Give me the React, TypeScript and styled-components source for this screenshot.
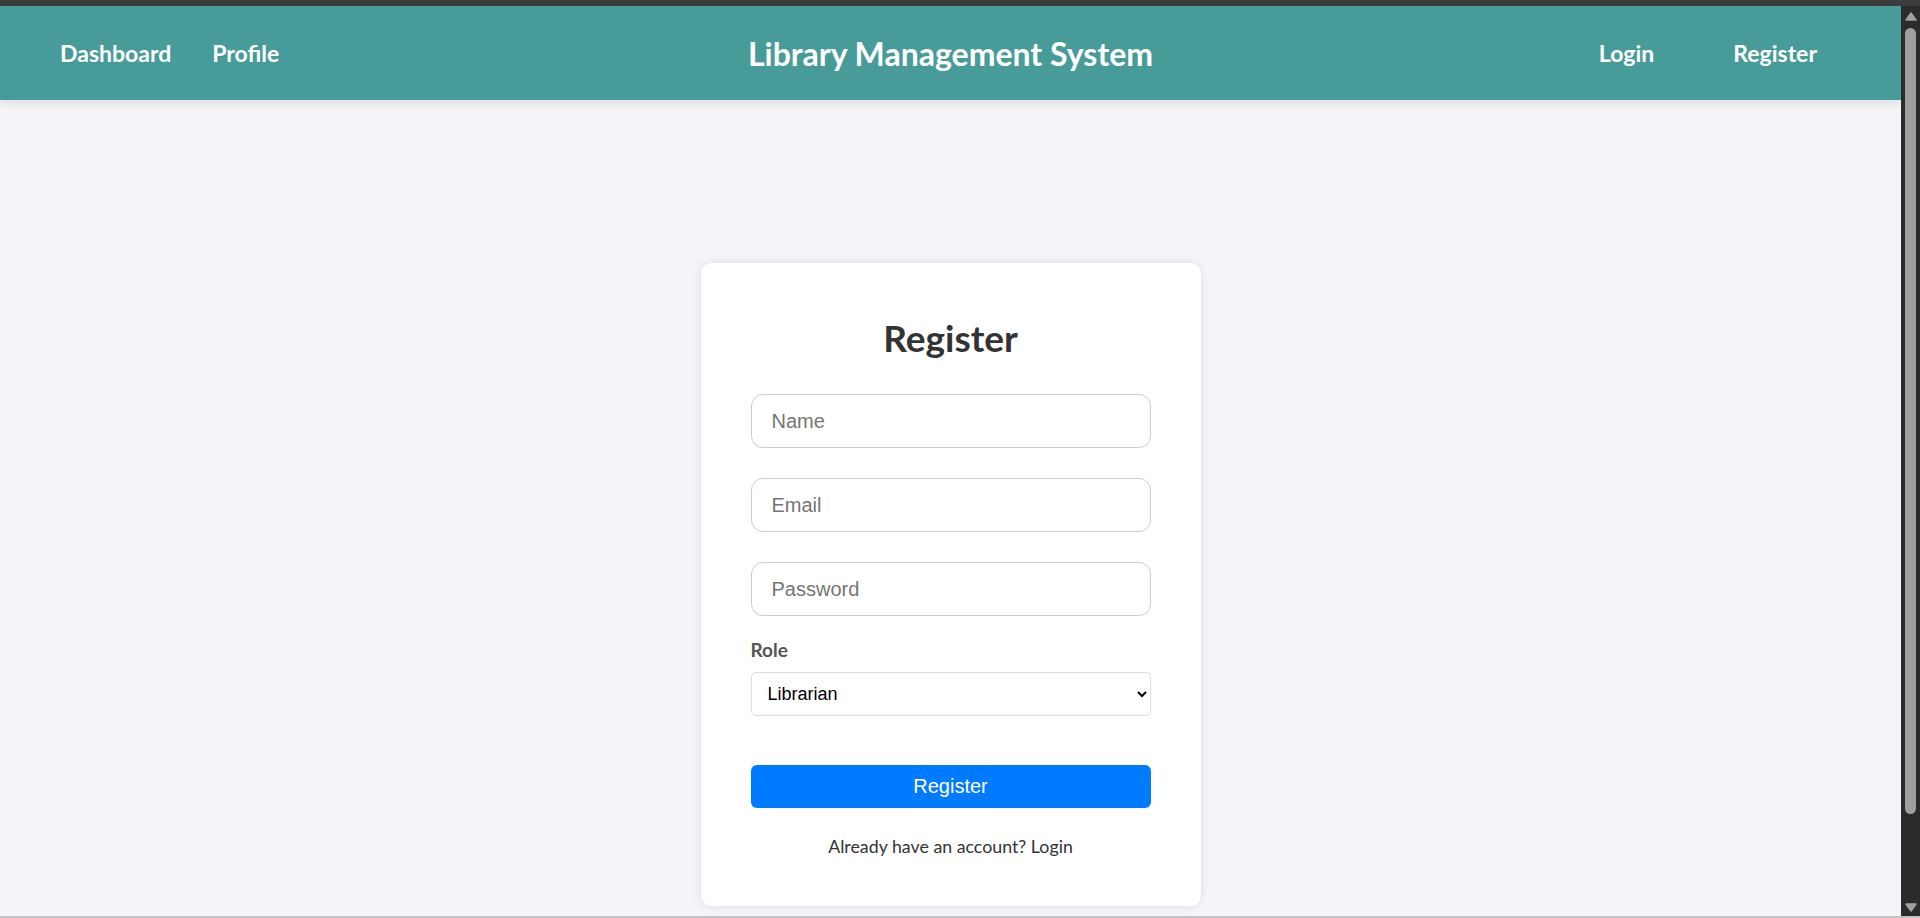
import React from "react";
import styled, { createGlobalStyle } from "styled-components";

const GlobalStyle = createGlobalStyle`
  html, body {
    margin: 0;
    padding: 0;
    height: 100%;
    overflow: hidden;
  }
  #root {
    height: 100%;
  }
  * {
    box-sizing: border-box;
  }
`;

const Frame = styled.div`
  display: flex;
  flex-direction: column;
  height: 100vh;
  background: #3c3c3c;
`;

const TopStrip = styled.div`
  height: 6px;
  flex: none;
  background: #3c3c3c;
`;

const BottomStrip = styled.div`
  height: 2px;
  flex: none;
  background: #c4c4c4;
`;

const Body = styled.div`
  flex: 1;
  min-height: 0;
  display: flex;
`;

const Viewport = styled.div`
  flex: 1;
  min-width: 0;
  overflow: hidden;
  background: #f4f4f9;
  font-family: Lato, "Open Sans", sans-serif;
`;

/* browser scrollbar drawn beside the page */
const Rail = styled.div`
  width: 19px;
  flex: none;
  display: flex;
  flex-direction: column;
  background: #2b2b2b;
`;

const RailButton = styled.div<{ $down?: boolean }>`
  height: 22px;
  flex: none;
  display: flex;
  justify-content: center;
  align-items: ${(p) => (p.$down ? "flex-end" : "flex-start")};
  padding: ${(p) => (p.$down ? "0 0 4px" : "6px 0 0")};
`;

const RailTrack = styled.div`
  flex: 1;
  padding: 0 4px;
`;

const Thumb = styled.div`
  height: 786px;
  background: #9f9f9f;
  border-radius: 6px;
`;

const Arrow = ({ down }: { down?: boolean }) => (
  <svg width="12" height="9" viewBox="0 0 12 9">
    <polygon
      points={down ? "1,1 11,1 6,8" : "6,1 11,8 1,8"}
      fill="#a0a0a0"
      stroke="#a0a0a0"
      strokeWidth="1.5"
      strokeLinejoin="round"
    />
  </svg>
);

const Header = styled.header`
  position: relative;
  z-index: 1;
  height: 94px;
  display: grid;
  grid-template-columns: 1fr auto 1fr;
  align-items: center;
  background: #479b98;
  box-shadow: 0 3px 10px rgba(0, 0, 0, 0.1);
`;

const NavGroup = styled.nav<{ $align: "start" | "end"; $gap: number }>`
  display: flex;
  align-items: center;
  justify-content: ${(p) => (p.$align === "start" ? "flex-start" : "flex-end")};
  gap: ${(p) => p.$gap}px;
  padding: ${(p) => (p.$align === "start" ? "0 0 0 60px" : "0 84px 0 0")};
`;

const NavLink = styled.a`
  color: #ffffff;
  font-size: 23px;
  font-weight: 700;
  text-decoration: none;
  cursor: pointer;
`;

const Title = styled.h1`
  margin: 0;
  color: #ffffff;
  font-size: 32px;
  font-weight: 700;
`;

const Main = styled.main`
  display: flex;
  justify-content: center;
  padding: 163px 0 102px;
`;

const Card = styled.div`
  width: 500px;
  padding: 53px 50px 49px;
  background: #ffffff;
  border-radius: 10px;
  box-shadow: 0 0 10px rgba(0, 0, 0, 0.1);
  display: flex;
  flex-direction: column;
`;

const Heading = styled.h2`
  margin: 0 0 35px;
  text-align: center;
  color: #333333;
  font-size: 37px;
  font-weight: 700;
  line-height: 43px;
`;

const TextInput = styled.input`
  width: 100%;
  height: 54px;
  margin-bottom: 30px;
  padding: 0 20px;
  border: 1px solid #cccccc;
  border-radius: 12px;
  font-family: "Liberation Sans", Arial, sans-serif;
  font-size: 20px;
  color: #333;
  background: #fff;
  outline: none;
  &::placeholder {
    color: #757575;
  }
  &:last-of-type {
    margin-bottom: 22px;
  }
`;

const Label = styled.label`
  display: block;
  margin-bottom: 11px;
  color: #555555;
  font-size: 19px;
  font-weight: 700;
  line-height: 23px;
`;

const Select = styled.select`
  width: 100%;
  height: 44px;
  padding: 0 12px;
  border: 1px solid #dddddd;
  border-radius: 5px;
  background: #ffffff;
  color: #000000;
  font-family: "Liberation Sans", Arial, sans-serif;
  font-size: 18px;
  outline: none;
`;

const SubmitButton = styled.button`
  width: 100%;
  height: 43px;
  margin-top: 49px;
  border: none;
  border-radius: 6px;
  background: #007bff;
  color: #ffffff;
  font-family: "Liberation Sans", Arial, sans-serif;
  font-size: 20px;
  cursor: pointer;
`;

const Footnote = styled.p`
  margin: 27px 0 0;
  text-align: center;
  color: #333333;
  font-size: 17.8px;
  line-height: 22px;
`;

export default function App() {
  return (
    <>
      <GlobalStyle />
      <Frame>
        <TopStrip />
        <Body>
          <Viewport>
            <Header>
              <NavGroup $align="start" $gap={41}>
                <NavLink>Dashboard</NavLink>
                <NavLink>Profile</NavLink>
              </NavGroup>
              <Title>Library Management System</Title>
              <NavGroup $align="end" $gap={79}>
                <NavLink>Login</NavLink>
                <NavLink>Register</NavLink>
              </NavGroup>
            </Header>
            <Main>
              <Card>
                <Heading>Register</Heading>
                <form onSubmit={(e) => e.preventDefault()}>
                  <TextInput type="text" placeholder="Name" />
                  <TextInput type="email" placeholder="Email" />
                  <TextInput type="password" placeholder="Password" />
                  <Label htmlFor="role">Role</Label>
                  <Select id="role" defaultValue="librarian">
                    <option value="librarian">Librarian</option>
                    <option value="member">Member</option>
                  </Select>
                  <SubmitButton type="submit">Register</SubmitButton>
                </form>
                <Footnote>Already have an account? Login</Footnote>
              </Card>
            </Main>
          </Viewport>
          <Rail>
            <RailButton>
              <Arrow />
            </RailButton>
            <RailTrack>
              <Thumb />
            </RailTrack>
            <RailButton $down>
              <Arrow down />
            </RailButton>
          </Rail>
        </Body>
        <BottomStrip />
      </Frame>
    </>
  );
}
